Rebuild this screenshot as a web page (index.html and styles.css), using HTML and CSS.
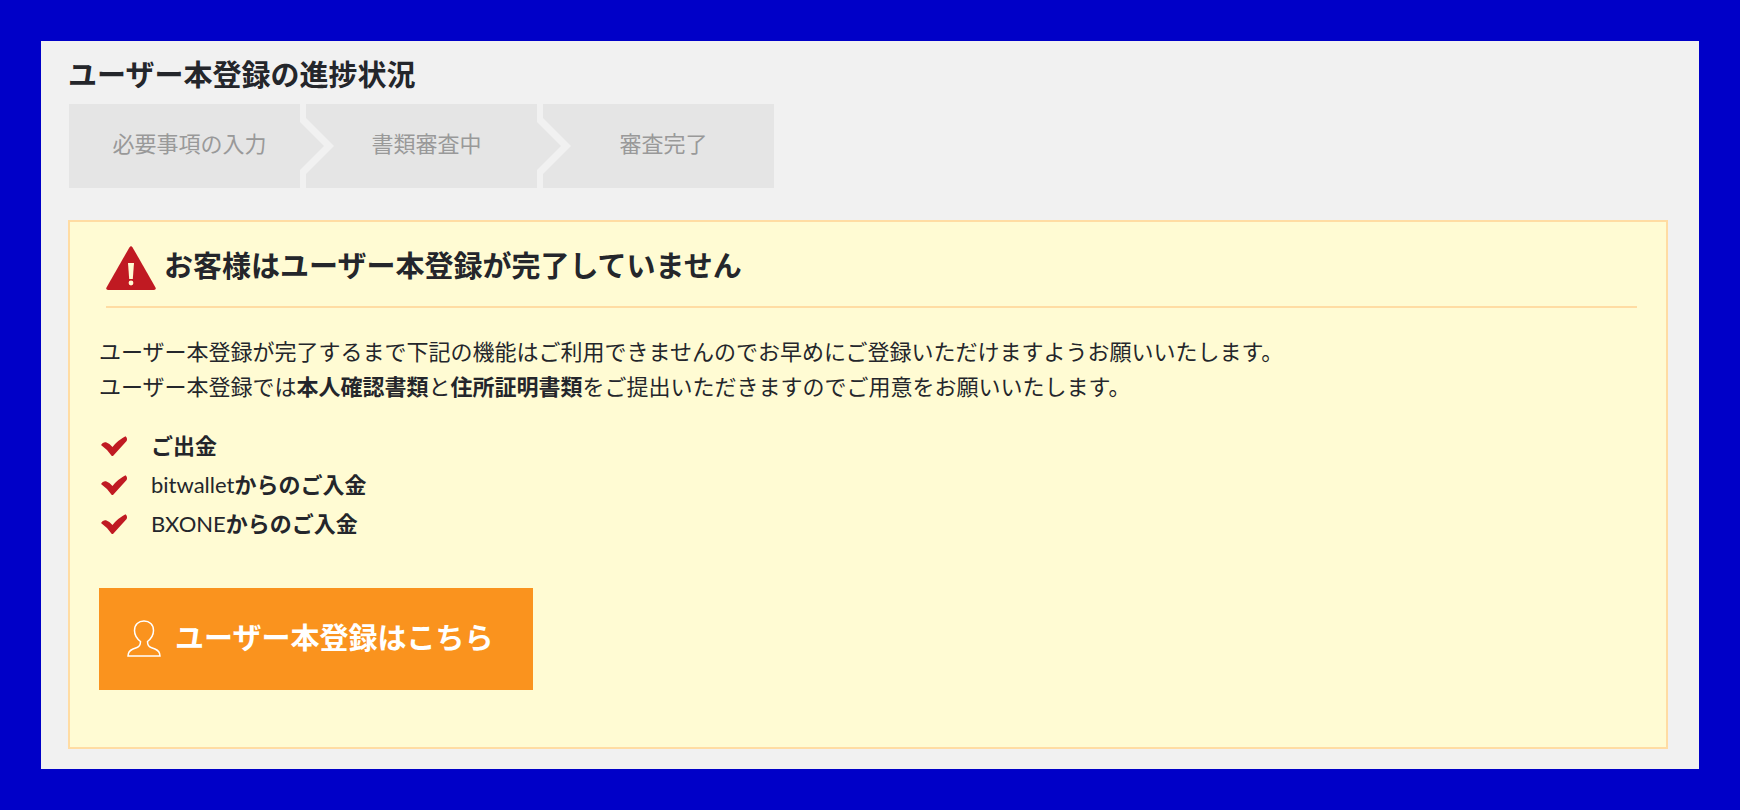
FILE: index.html
```html
<!DOCTYPE html>
<html lang="ja">
<head>
    <meta charset="utf-8">
    <title>ユーザー本登録</title>
    <link rel="stylesheet" href="styles.css">
</head>
<body>
    <main class="page">
        <h1 class="page-title">ユーザー本登録の進捗状況</h1>
        <ol class="steps">
            <li class="step">必要事項の入力</li>
            <li class="step">書類審査中</li>
            <li class="step">審査完了</li>
        </ol>

        <section class="notice">
            <div class="notice-header">
                <svg class="warning-icon" viewBox="0 0 50 44" aria-hidden="true">
                    <path d="M23.4 1.4Q25 -.8 26.6 1.4L49.5 41.4Q50.4 44 48 44H2Q-.4 44 .5 41.4Z" fill="#c01a22"/>
                    <path d="M22 17h6l-1.200 16h-3.600z" fill="#fffbd3"/>
                    <circle cx="25" cy="37" r="2.400" fill="#fffbd3"/>
                </svg>
                <h2 class="notice-title">お客様はユーザー本登録が完了していません</h2>
            </div>
            <p class="notice-text">
                ユーザー本登録が完了するまで下記の機能はご利用できませんのでお早めにご登録いただけますようお願いいたします。<br>
                ユーザー本登録では<strong>本人確認書類</strong>と<strong>住所証明書類</strong>をご提出いただきますのでご用意をお願いいたします。
            </p>
            <ul class="features">
                <li>
                    <svg class="check" viewBox="0 0 26 20" aria-hidden="true"><path d="M0 9Q2 5.5 5 6.300Q8.500 7.500 11.500 11Q16.500 4.500 24.500 .3Q26.800 2 25.600 5L12 20H10.800Q6 13 0 9Z"/></svg>
                    <b>ご出金</b>
                </li>
                <li>
                    <svg class="check" viewBox="0 0 26 20" aria-hidden="true"><path d="M0 9Q2 5.5 5 6.300Q8.500 7.500 11.500 11Q16.500 4.500 24.500 .3Q26.800 2 25.600 5L12 20H10.800Q6 13 0 9Z"/></svg>
                    <span>bitwallet<b>からのご入金</b></span>
                </li>
                <li>
                    <svg class="check" viewBox="0 0 26 20" aria-hidden="true"><path d="M0 9Q2 5.5 5 6.300Q8.500 7.500 11.500 11Q16.500 4.500 24.500 .3Q26.800 2 25.600 5L12 20H10.800Q6 13 0 9Z"/></svg>
                    <span>BXONE<b>からのご入金</b></span>
                </li>
            </ul>
            <a class="register" href="#">
                <svg class="user-icon" viewBox="0 0 34 37" aria-hidden="true">
                    <path d="M13.5 21.5C9 18 7.500 14.500 7.500 10.500C7.500 4.500 11.500 1 17 1S26.500 4.500 26.500 10.500C26.500 14.500 25 18 20.500 21.500C20.500 25 21 26.500 24 27.500L28 29C31.500 30.500 33 32 33 36H1C1 32 2.500 30.500 6 29L10 27.500C13 26.500 13.500 25 13.500 21.500Z"/>
                </svg>
                ユーザー本登録はこちら
            </a>
        </section>
    </main>
</body>
</html>
```
FILE: styles.css
```css
* {
    box-sizing: border-box;
}

body {
    margin: 0;
    padding: 41px;
    background: #0000c8;
    color: #24262b;
    font-family: Lato, "Noto Sans CJK JP", sans-serif;
    font-size: 22px;
}

h1, h2, p, ol, ul {
    margin: 0;
    padding: 0;
}

ol, ul {
    list-style: none;
}

.page {
    padding: 14px 31px 20px 27px;
    background: #f1f1f1;
}

.page-title {
    margin-bottom: 9px;
    font-size: 29px;
    line-height: 40px;
}

/* progress steps */
.steps {
    display: grid;
    grid-template-columns: repeat(3, 231px);
    gap: 6px;
    margin: 0 0 32px 1px;
}

.step {
    position: relative;
    padding: 0 0 4px 10px;
    background: #e5e5e5;
    color: #999;
    line-height: 80px;
    text-align: center;
}

.step:not(:last-child)::before,
.step:not(:last-child)::after {
    content: "";
    position: absolute;
    z-index: 1;
    left: 100%;
    top: 50%;
    transform: translateY(-50%);
    border-style: solid;
    border-color: transparent;
    border-right-width: 0;
}

.step:not(:last-child)::before {
    border-width: 34px 0 34px 34px;
    border-left-color: #f1f1f1;
}

.step:not(:last-child)::after {
    border-width: 24px 0 24px 24px;
    border-left-color: #e5e5e5;
}

/* notice box */
.notice {
    padding: 24px 29px 57px;
    border: 2px solid #ffdca3;
    background: #fffbd3;
}

.notice-header {
    display: flex;
    align-items: center;
    gap: 8px;
    margin: 0 0 26px 7px;
    padding-bottom: 16px;
    border-bottom: 2px solid #ffdca3;
}

.warning-icon {
    width: 50px;
    height: 44px;
}

.notice-title {
    font-size: 29px;
    line-height: 40px;
    padding-bottom: 4px;
}

.notice-text {
    margin-bottom: 22px;
    line-height: 35px;
}

.features {
    margin-bottom: 45px;
}

.features li {
    display: flex;
    align-items: center;
    gap: 24px;
    padding-left: 2px;
    line-height: 39px;
}

.check {
    width: 26px;
    height: 20px;
    fill: #c01a22;
}

.register {
    display: inline-flex;
    align-items: center;
    gap: 14px;
    padding: 0 40px 2px 28px;
    background: #fa931e;
    color: #fff;
    font-size: 29px;
    font-weight: bold;
    line-height: 100px;
    text-decoration: none;
    vertical-align: top;
}

.user-icon {
    width: 34px;
    height: 37px;
    fill: none;
    stroke: #fff;
    stroke-width: 1.5;
}
```
